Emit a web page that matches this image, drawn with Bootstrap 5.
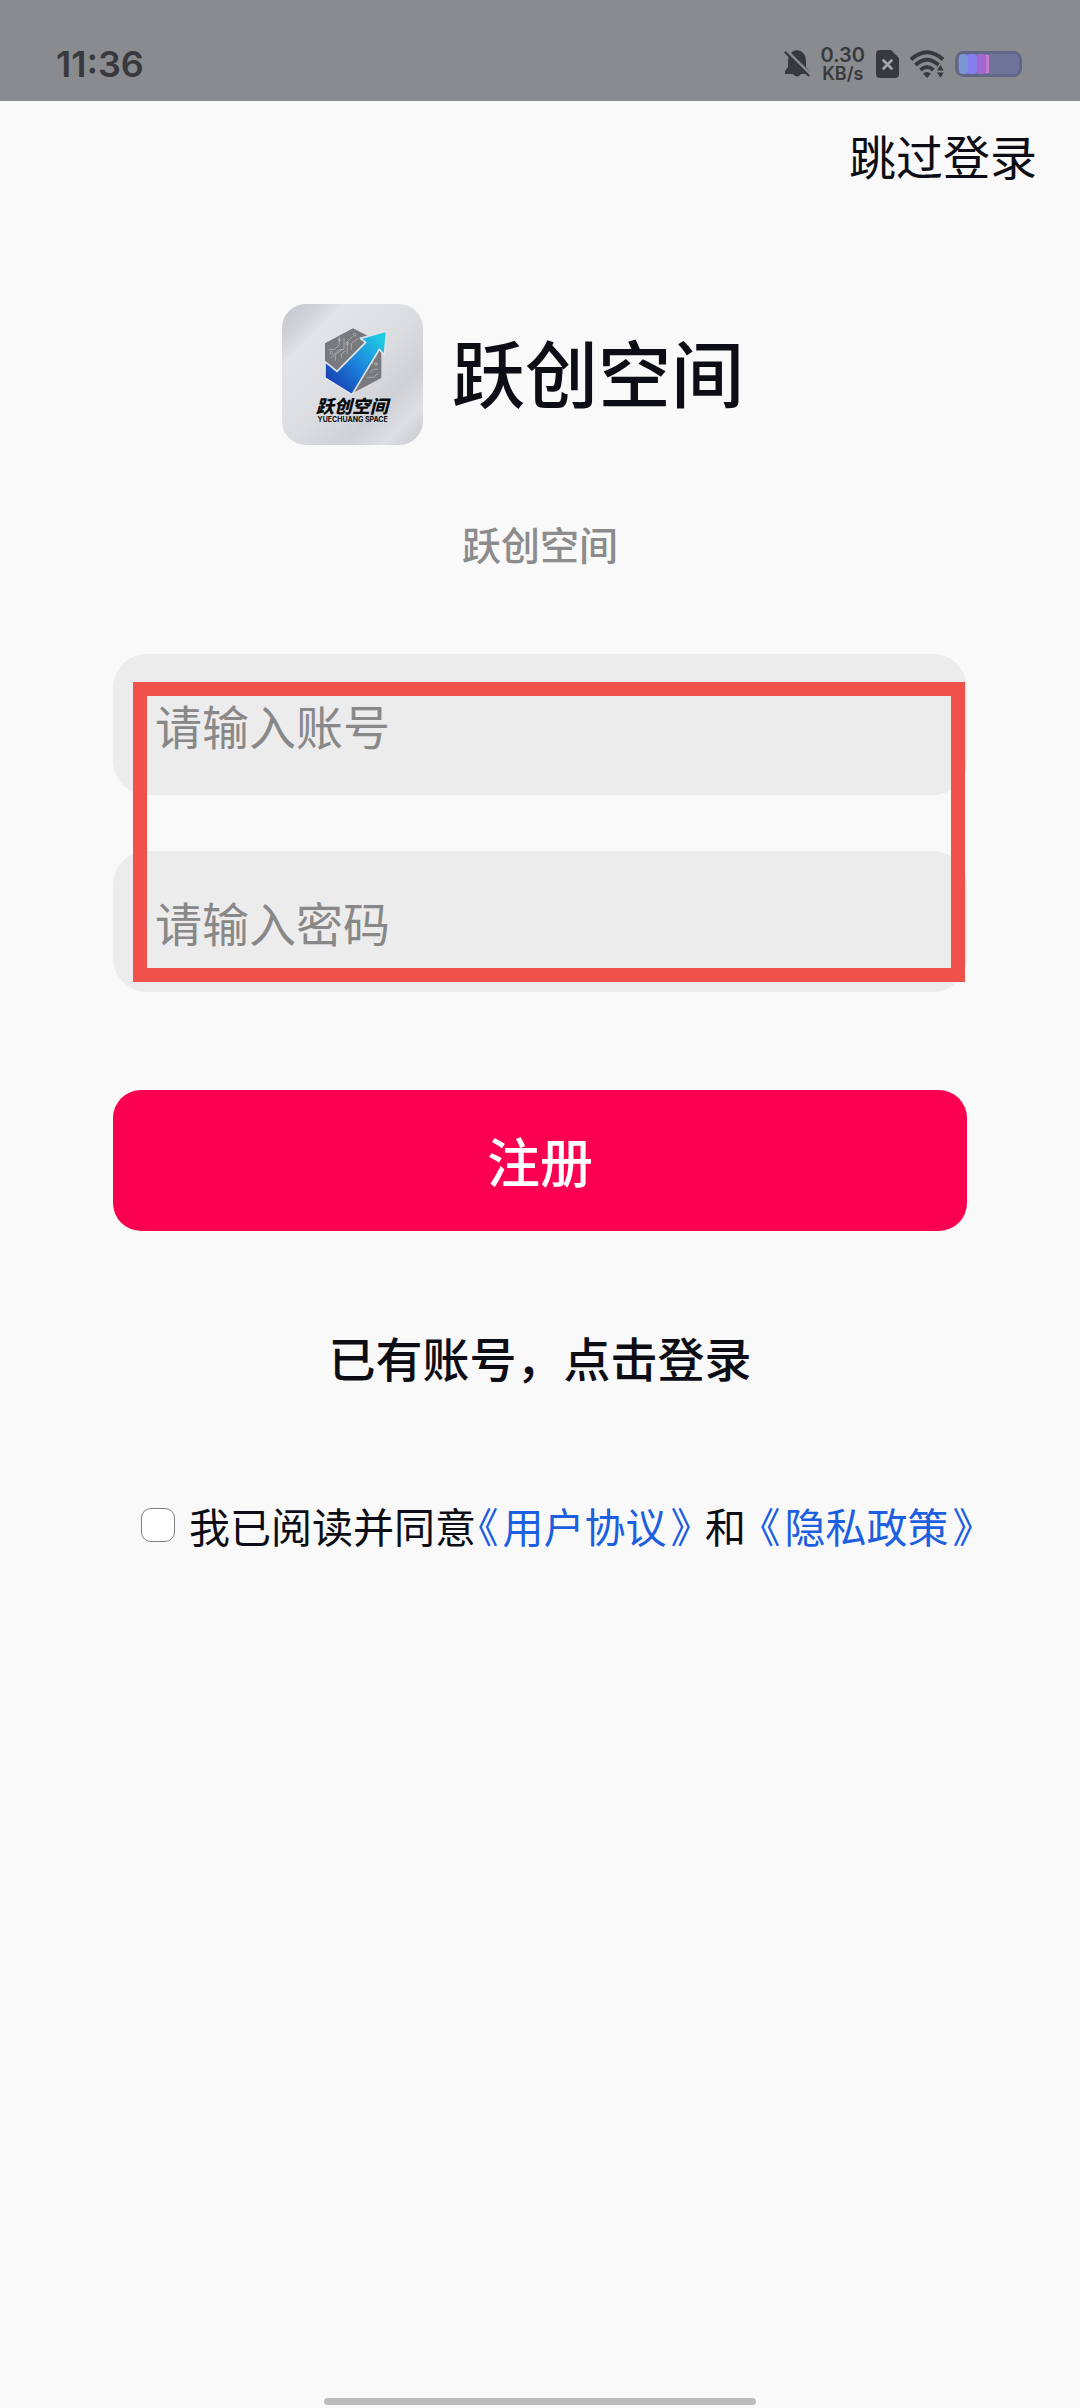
<!DOCTYPE html>
<html lang="zh-CN">
<head>
<meta charset="utf-8">
<meta name="viewport" content="width=device-width, initial-scale=1">
<title>跃创空间</title>
<link href="https://cdn.jsdelivr.net/npm/bootstrap@5.3.0/dist/css/bootstrap.min.css" rel="stylesheet">
<style>
  body { background: #f9f9f9; color: #0d0e15; font-family: "Noto Sans CJK SC", sans-serif; font-size: 47px; line-height: 60px; }
  a { color: inherit; text-decoration: none; }
  svg { display: block; flex: none; }
  .status { background: #8a8b8f; color: #38393d; height: 101px; padding: 26px 58px 0 56px; font-family: Inter, sans-serif; font-weight: 600; }
  .clock { font-size: 36px; line-height: 76px; }
  .status-icons { gap: 11px; height: 76px; }
  .speed { font-size: 20px; line-height: 20px; }
  .speed small { display: block; font-size: 18px; line-height: 18px; font-weight: 600; }
  .skip { padding: 24px 43px 0; }
  .brand { margin-top: 119px; gap: 29px; }
  .brand h1 { font-size: 73px; line-height: 90px; font-weight: 500; margin: 0; padding: 0 54px 10px 0; }
  .tagline { margin: 73px 0 0; font-size: 39px; line-height: 50px; color: #8c8c8c; font-weight: 500; }
  .sign-up { margin-top: 86px; padding: 0 113px; }
  .fields { gap: 56px; }
  .field, .field:focus { height: 141px; border: 0; border-radius: 34px; background: #ececec; font-size: 47px; line-height: 60px; padding: 0 42px; box-shadow: none; }
  .field::placeholder { color: #888; }
  .highlight { inset: 28px 2px 10px 20px; border: 14px solid #f0524b; pointer-events: none; }
  .btn-register, .btn-register:hover { margin-top: 98px; height: 141px; border: 0; border-radius: 28px; background: #fb0050; color: #fff; font-size: 53px; font-weight: 500; }
  .to-login { margin-top: 96px; font-weight: 500; }
  .agree { margin-top: 113px; padding-left: 28px; font-size: 41px; line-height: 50px; gap: 14px; }
  .agree .form-check-input { width: 34px; height: 34px; margin: 0; border: 1px solid #808080; border-radius: 10px; flex: none; }
  .agree a { color: #1c5fe0; font-feature-settings: "halt"; }
  .agree a span { margin: 0 4px; }
  .agree .first-link { margin-left: -12px; }
  .home-bar { width: 40%; height: 7px; border-radius: 4px; background: #bdbdbd; margin-bottom: 3px; }
</style>
<script src="https://cdn.jsdelivr.net/npm/bootstrap@5.3.0/dist/js/bootstrap.bundle.min.js" defer></script>
</head>
<body>
<div class="d-flex flex-column min-vh-100">
  <header class="status d-flex justify-content-between">
    <time class="clock">11:36</time>
    <div class="status-icons d-flex align-items-center">
      <svg width="26" height="28" viewBox="0 0 26 28" aria-hidden="true">
        <path fill="#38393d" d="M13 0a10 10 0 0 1 9 10v7l3 4v3H17a4.500 4.500 0 0 1-8 0H1v-3l3-4v-7A10 10 0 0 1 13 0Z"/>
        <path stroke="#8a8b8f" stroke-width="3" d="M2 0l24 24"/>
        <path stroke="#38393d" stroke-width="2.400" stroke-linecap="round" d="M1.500 2.500l23 23"/>
      </svg>
      <div class="speed text-center">0.30<small>KB/s</small></div>
      <svg width="23" height="28" viewBox="0 0 23 28" aria-hidden="true">
        <path fill="#38393d" d="M4 0h11l8 8v16a4 4 0 0 1-4 4H4a4 4 0 0 1-4-4V4a4 4 0 0 1 4-4Z"/>
        <path stroke="#a5a6a9" stroke-width="2.600" stroke-linecap="round" d="M7.500 10.500l8 8m0-8l-8 8"/>
      </svg>
      <svg width="34" height="28" viewBox="0 0 34 28" aria-hidden="true">
        <g fill="none" stroke="#38393d" stroke-width="3.800">
          <path d="M1 9.500Q17-5 33 9.500"/><path d="M5.500 15Q17 4.500 28.500 15"/><path d="M10.500 20Q17 14 23.500 20"/>
        </g>
        <path fill="#38393d" d="M13 23.500q4-3 8 0l-4 4.500Z"/>
        <path fill="#38393d" stroke="#8a8b8f" d="M26 21l4.500-7 4 7ZM26 22h8.500l-4 6.500Z"/>
      </svg>
      <svg width="67" height="26" viewBox="0 0 67 26" aria-hidden="true">
        <rect x="1.500" y="1.500" width="64" height="23" rx="7" fill="#70749a" stroke="#62678a" stroke-width="3"/>
        <path fill="#c77bc9" d="M28 4h6v18h-6Z"/>
        <rect x="21" y="3" width="10" height="20" rx="4" fill="#a266d3"/>
        <rect x="12" y="3" width="10" height="20" rx="4" fill="#8580ed"/>
        <rect x="4" y="3" width="9" height="20" rx="4" fill="#7c96d3"/>
      </svg>
    </div>
  </header>

  <div class="skip text-end"><a href="#">跳过登录</a></div>

  <div class="brand d-flex justify-content-center align-items-center">
    <svg width="141" height="141" viewBox="36 42 423 423" role="img" aria-label="跃创空间 YUECHUANG SPACE">
      <defs>
        <linearGradient id="plate" x1="0" y1="0" x2="1" y2="1">
          <stop offset="0" stop-color="#c5c7ce"/><stop offset=".13" stop-color="#d0d2d8"/><stop offset=".22" stop-color="#e3e4e8"/><stop offset=".5" stop-color="#dcdde1"/><stop offset=".72" stop-color="#cfd1d7"/><stop offset=".86" stop-color="#dedfe3"/><stop offset="1" stop-color="#c4c7ce"/>
        </linearGradient>
        <linearGradient id="arrow" x1="0" y1="1" x2="1" y2="0">
          <stop offset=".12" stop-color="#173fb2"/><stop offset=".5" stop-color="#1c83dc"/><stop offset=".9" stop-color="#20cbe2"/>
        </linearGradient>
      </defs>
      <rect x="36" y="42" width="423" height="423" rx="72" fill="url(#plate)"/>
      <path fill="#77797d" d="M249 115l85 43v106l-87 46-82-48V160Z"/>
      <g fill="none" stroke="#c3c4c7" stroke-width="2">
        <path d="M176 178h18l14-14v-24M182 204l24-24 16-2v-34M196 212v-18l20-16M232 192v-38l16-14M244 180v-20l20-14M214 204v-12l12-10M300 250l10-12h14M290 262h20l14-12M308 222v-14l12-8"/>
        <circle cx="184" cy="188" r="4"/><circle cx="232" cy="160" r="4"/><circle cx="254" cy="134" r="4"/><circle cx="318" cy="222" r="4"/><circle cx="208" cy="150" r="3"/>
      </g>
      <path fill="url(#arrow)" stroke="#e1e3e8" stroke-width="5" stroke-linejoin="round" d="M165 215l36 29 86-87-16-12 79-22-7 73-15-18-82 136-81-50Z"/>
      <g fill="#090a0c">
        <text x="246" y="368" text-anchor="middle" font-family="Noto Sans CJK SC, sans-serif" font-size="54" font-weight="900" font-style="italic">跃创空间</text>
        <text x="248" y="396" text-anchor="middle" font-family="Inter, sans-serif" font-size="21" font-weight="700">YUECHUANG SPACE</text>
      </g>
    </svg>
    <h1>跃创空间</h1>
  </div>
  <p class="tagline text-center">跃创空间</p>

  <form class="sign-up d-flex flex-column">
    <div class="fields position-relative d-flex flex-column">
      <input class="field form-control" id="account" type="text" placeholder="请输入账号" aria-label="账号">
      <input class="field form-control" id="password" type="password" placeholder="请输入密码" aria-label="密码">
      <div class="highlight position-absolute"></div>
    </div>
    <button class="btn btn-register w-100" type="button">注册</button>
    <a class="to-login text-center" href="#">已有账号，点击登录</a>
    <div class="agree d-flex align-items-center text-nowrap">
      <input class="form-check-input" id="agree" type="checkbox">
      <label for="agree">我已阅读并同意</label>
      <a class="first-link" href="#">《<span>用户协议</span>》</a>
      <label for="agree">和</label>
      <a href="#">《<span>隐私政策</span>》</a>
    </div>
  </form>

  <div class="home-bar mt-auto mx-auto"></div>
</div>
</body>
</html>
